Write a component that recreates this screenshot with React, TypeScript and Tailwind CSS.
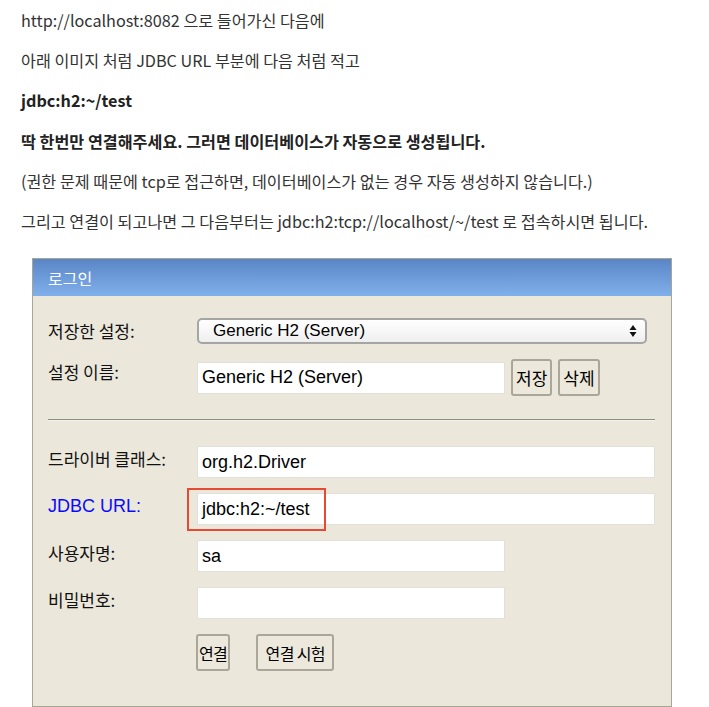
const kr = '[font-family:"Noto_Sans_CJK_KR","Noto_Sans",sans-serif]'

const Field = ({ wide, value }: { wide?: boolean; value?: string }) => (
  <div
    className={`flex h-[32px] items-center border border-[#e2e0da] bg-white pl-[4px] font-['Liberation_Sans',Arial,sans-serif] text-[18px] text-black ${
      wide ? 'w-[458px]' : 'w-[308px]'
    }`}
  >
    {value}
  </div>
)

const Btn = ({ children, tight, className }: { children: string; tight?: boolean; className?: string }) => (
  <div
    className={`flex h-[37px] items-center justify-center whitespace-pre rounded-[3px] border-2 border-[#aaa699] bg-[#ece8dc] text-black ${kr} ${
      tight ? 'px-[1px] text-[16px] tracking-[-0.6px]' : 'px-[3px] text-[17px]'
    } ${className ?? ''}`}
  >
    {children}
  </div>
)

const Row = ({ label, blue, children }: { label: string; blue?: boolean; children: React.ReactNode }) => (
  <div className="flex items-start">
    <div
      className={`w-[149px] pt-[1px] leading-[24px] ${blue ? "font-['Liberation_Sans',Arial,sans-serif] text-[18px] text-[#0a0aff]" : `text-[17px] text-[#111] ${kr}`}`}
    >
      {label}
    </div>
    {children}
  </div>
)

export default function App() {
  return (
    <div className="h-[707px] w-[709px] overflow-hidden bg-white">
      <div className={`pl-[21px] text-[16.2px] leading-[40.2px] text-[#333] ${kr}`}>
        <p>http://localhost:8082 으로 들어가신 다음에</p>
        <p>아래 이미지 처럼 JDBC URL 부분에 다음 처럼 적고</p>
        <p className="font-bold text-[#222]">jdbc:h2:~/test</p>
        <p className="font-bold text-[#222]">딱 한번만 연결해주세요. 그러면 데이터베이스가 자동으로 생성됩니다.</p>
        <p>(권한 문제 때문에 tcp로 접근하면, 데이터베이스가 없는 경우 자동 생성하지 않습니다.)</p>
        <p>그리고 연결이 되고나면 그 다음부터는 jdbc:h2:tcp://localhost/~/test 로 접속하시면 됩니다.</p>
      </div>

      <div className="ml-[32px] mt-[17px] h-[449px] w-[640px] border border-[#a8a597] bg-[#ebe7db]">
        <div className={`flex h-[37px] items-center bg-gradient-to-b from-[#5a86c6] to-[#80b0ec] pl-[15px] text-[16px] text-white ${kr}`}>
          로그인
        </div>

        <div className="flex flex-col px-[15px] pt-[22px]">
          <Row label="저장한 설정:">
            <div className="flex h-[26px] w-[450px] items-center justify-between rounded-[5px] border-2 border-[#a5a5a5] bg-gradient-to-b from-white to-[#efefef] pl-[14px] pr-[8px] font-['Liberation_Sans',Arial,sans-serif] text-[17px] text-black">
              <span>Generic H2 (Server)</span>
              <svg width="8" height="14" viewBox="0 0 8 14">
                <path d="M4 1 L7.5 6 H0.5 Z" fill="#111" />
                <path d="M4 13 L7.5 8 H0.5 Z" fill="#111" />
              </svg>
            </div>
          </Row>

          <div className="mt-[15px]">
            <Row label="설정 이름:">
              <div className="flex items-center gap-[6px]">
                <Field value="Generic H2 (Server)" />
                <Btn>저장</Btn>
                <Btn>삭제</Btn>
              </div>
            </Row>
          </div>

          <div className="mt-[23px] h-[2px] w-[607px] border-t border-[#8e8b84] bg-[#f4f2ec]" />

          <div className="mt-[25px] flex flex-col gap-[15px]">
            <Row label="드라이버 클래스:">
              <Field wide value="org.h2.Driver" />
            </Row>
            <Row label="JDBC URL:" blue>
              <div className="relative">
                <Field wide value="jdbc:h2:~/test" />
                <div className="absolute left-[-10px] top-[-5px] h-[43px] w-[139px] border-2 border-[#e44a34]" />
              </div>
            </Row>
            <Row label="사용자명:">
              <Field value="sa" />
            </Row>
            <Row label="비밀번호:">
              <Field />
            </Row>
            <div className="flex gap-[26px] pl-[148px]">
              <Btn tight>연결</Btn>
              <Btn tight className="w-[78px]">연결 시험</Btn>
            </div>
          </div>
        </div>
      </div>
    </div>
  )
}
